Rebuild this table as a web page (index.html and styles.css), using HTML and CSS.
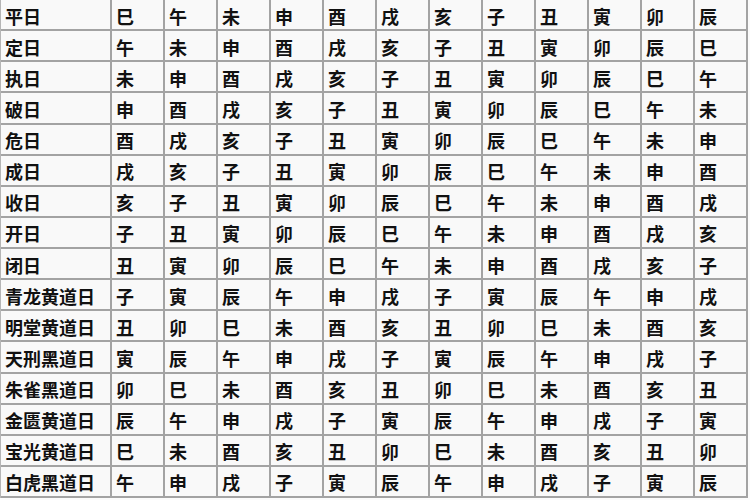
FILE: index.html
```html
<!DOCTYPE html>
<html lang="zh">
<head>
<meta charset="utf-8">
<link rel="stylesheet" href="styles.css">
</head>
<body>
<div class="grid">
<div class="c h">平日</div><div class="c">巳</div><div class="c">午</div><div class="c">未</div><div class="c">申</div><div class="c">酉</div><div class="c">戌</div><div class="c">亥</div><div class="c">子</div><div class="c">丑</div><div class="c">寅</div><div class="c">卯</div><div class="c">辰</div>
<div class="c h">定日</div><div class="c">午</div><div class="c">未</div><div class="c">申</div><div class="c">酉</div><div class="c">戌</div><div class="c">亥</div><div class="c">子</div><div class="c">丑</div><div class="c">寅</div><div class="c">卯</div><div class="c">辰</div><div class="c">巳</div>
<div class="c h">执日</div><div class="c">未</div><div class="c">申</div><div class="c">酉</div><div class="c">戌</div><div class="c">亥</div><div class="c">子</div><div class="c">丑</div><div class="c">寅</div><div class="c">卯</div><div class="c">辰</div><div class="c">巳</div><div class="c">午</div>
<div class="c h">破日</div><div class="c">申</div><div class="c">酉</div><div class="c">戌</div><div class="c">亥</div><div class="c">子</div><div class="c">丑</div><div class="c">寅</div><div class="c">卯</div><div class="c">辰</div><div class="c">巳</div><div class="c">午</div><div class="c">未</div>
<div class="c h">危日</div><div class="c">酉</div><div class="c">戌</div><div class="c">亥</div><div class="c">子</div><div class="c">丑</div><div class="c">寅</div><div class="c">卯</div><div class="c">辰</div><div class="c">巳</div><div class="c">午</div><div class="c">未</div><div class="c">申</div>
<div class="c h">成日</div><div class="c">戌</div><div class="c">亥</div><div class="c">子</div><div class="c">丑</div><div class="c">寅</div><div class="c">卯</div><div class="c">辰</div><div class="c">巳</div><div class="c">午</div><div class="c">未</div><div class="c">申</div><div class="c">酉</div>
<div class="c h">收日</div><div class="c">亥</div><div class="c">子</div><div class="c">丑</div><div class="c">寅</div><div class="c">卯</div><div class="c">辰</div><div class="c">巳</div><div class="c">午</div><div class="c">未</div><div class="c">申</div><div class="c">酉</div><div class="c">戌</div>
<div class="c h">开日</div><div class="c">子</div><div class="c">丑</div><div class="c">寅</div><div class="c">卯</div><div class="c">辰</div><div class="c">巳</div><div class="c">午</div><div class="c">未</div><div class="c">申</div><div class="c">酉</div><div class="c">戌</div><div class="c">亥</div>
<div class="c h">闭日</div><div class="c">丑</div><div class="c">寅</div><div class="c">卯</div><div class="c">辰</div><div class="c">巳</div><div class="c">午</div><div class="c">未</div><div class="c">申</div><div class="c">酉</div><div class="c">戌</div><div class="c">亥</div><div class="c">子</div>
<div class="c h">青龙黄道日</div><div class="c">子</div><div class="c">寅</div><div class="c">辰</div><div class="c">午</div><div class="c">申</div><div class="c">戌</div><div class="c">子</div><div class="c">寅</div><div class="c">辰</div><div class="c">午</div><div class="c">申</div><div class="c">戌</div>
<div class="c h">明堂黄道日</div><div class="c">丑</div><div class="c">卯</div><div class="c">巳</div><div class="c">未</div><div class="c">酉</div><div class="c">亥</div><div class="c">丑</div><div class="c">卯</div><div class="c">巳</div><div class="c">未</div><div class="c">酉</div><div class="c">亥</div>
<div class="c h">天刑黑道日</div><div class="c">寅</div><div class="c">辰</div><div class="c">午</div><div class="c">申</div><div class="c">戌</div><div class="c">子</div><div class="c">寅</div><div class="c">辰</div><div class="c">午</div><div class="c">申</div><div class="c">戌</div><div class="c">子</div>
<div class="c h">朱雀黑道日</div><div class="c">卯</div><div class="c">巳</div><div class="c">未</div><div class="c">酉</div><div class="c">亥</div><div class="c">丑</div><div class="c">卯</div><div class="c">巳</div><div class="c">未</div><div class="c">酉</div><div class="c">亥</div><div class="c">丑</div>
<div class="c h">金匮黄道日</div><div class="c">辰</div><div class="c">午</div><div class="c">申</div><div class="c">戌</div><div class="c">子</div><div class="c">寅</div><div class="c">辰</div><div class="c">午</div><div class="c">申</div><div class="c">戌</div><div class="c">子</div><div class="c">寅</div>
<div class="c h">宝光黄道日</div><div class="c">巳</div><div class="c">未</div><div class="c">酉</div><div class="c">亥</div><div class="c">丑</div><div class="c">卯</div><div class="c">巳</div><div class="c">未</div><div class="c">酉</div><div class="c">亥</div><div class="c">丑</div><div class="c">卯</div>
<div class="c h">白虎黑道日</div><div class="c">午</div><div class="c">申</div><div class="c">戌</div><div class="c">子</div><div class="c">寅</div><div class="c">辰</div><div class="c">午</div><div class="c">申</div><div class="c">戌</div><div class="c">子</div><div class="c">寅</div><div class="c">辰</div>
</div>
</body>
</html>
```

FILE: styles.css
```css
html, body {
  margin: 0;
  padding: 0;
  background: #fbfbfb;
}
body {
  width: 750px;
  height: 500px;
  overflow: hidden;
  font-family: "Noto Sans CJK SC", "Noto Sans CJK TC", sans-serif;
}
.grid {
  display: grid;
  grid-template-columns: 111px repeat(12, 53px);
  grid-template-rows: repeat(16, 31.125px);
  border-left: 1px solid #b5b5b5;
  width: 747px;
}
.c {
  box-sizing: border-box;
  border-right: 2px solid #a3a3a3;
  border-bottom: 2px solid #a3a3a3;
  background: #f9f9f9;
  color: #111;
  font-size: 18px;
  font-weight: 700;
  line-height: 1;
  display: flex;
  align-items: center;
  padding: 2px 0 0 4px;
}
.h {
  padding-left: 4px;
}
```
